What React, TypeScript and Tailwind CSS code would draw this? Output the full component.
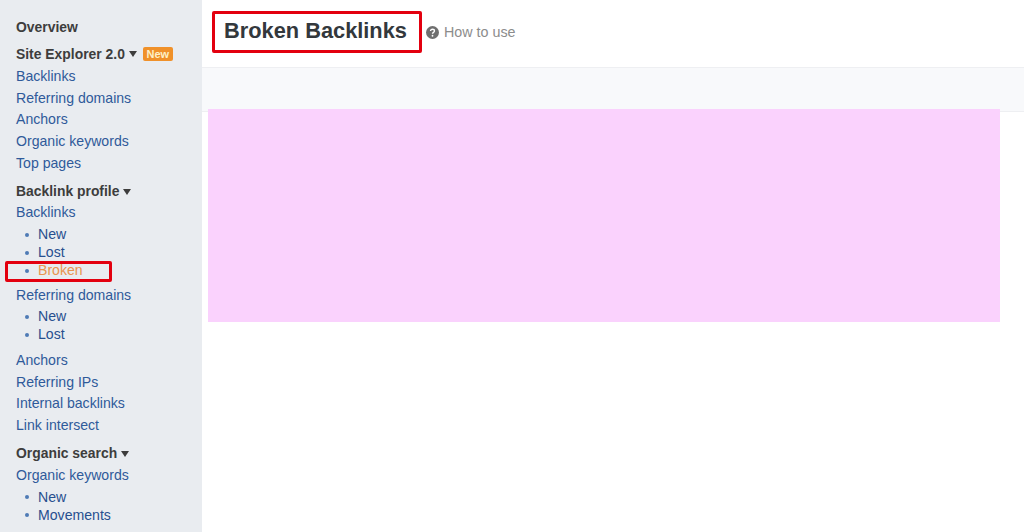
import type { ReactNode } from "react";

const Heading = ({ children, className = "" }: { children: ReactNode; className?: string }) => (
  <div className={`flex h-[22px] items-center text-[13.9px] font-bold text-[#3d3d3d] ${className}`}>{children}</div>
);

const Caret = () => <span className="ml-[4px] h-0 w-0 border-x-[4px] border-t-[6px] border-x-transparent border-t-[#3d3d3d]" />;

const NavLink = ({ label }: { label: string }) => (
  <div className="flex h-[21.75px] items-center text-[14.1px] text-[#2f5a9a]">{label}</div>
);

const SubLink = ({ label, active }: { label: string; active?: boolean }) => (
  <div className={`flex h-[18px] items-center text-[14.1px] ${active ? "text-[#e8954f]" : "text-[#274f8f]"}`}>
    <span className="ml-[9px] mr-[9px] h-[4px] w-[4px] rounded-full bg-[#4f7bb5]" />
    {label}
  </div>
);

const SubList = ({ children, className = "mt-[2px]" }: { children: ReactNode; className?: string }) => (
  <div className={`flex flex-col ${className}`}>{children}</div>
);

export default function App() {
  return (
    <div className="flex h-[532px] w-[1024px] overflow-hidden bg-white font-['Liberation_Sans',Arial,sans-serif]">
      {/* SIDEBAR */}
      <aside className="relative flex w-[202px] shrink-0 flex-col bg-[#e9ecf0] pl-4 pt-4">
        <Heading>Overview</Heading>
        <Heading className="mt-[5px]">
          Site Explorer 2.0
          <Caret />
          <span className="ml-[6px] flex h-[14px] w-[30px] items-center justify-center rounded-[2px] bg-[#f0912a] text-[11px] font-bold text-[#fdf0c8]">New</span>
        </Heading>
        <div className="mt-[0.6px]">
          <NavLink label="Backlinks" />
          <NavLink label="Referring domains" />
          <NavLink label="Anchors" />
          <NavLink label="Organic keywords" />
          <NavLink label="Top pages" />
        </div>

        <Heading className="mt-[6.4px] -mb-[0.8px]">
          Backlink profile
          <Caret />
        </Heading>
        <NavLink label="Backlinks" />
        <SubList>
          <SubLink label="New" />
          <SubLink label="Lost" />
          <SubLink label="Broken" active />
        </SubList>
        <div className="mt-[5.4px]">
          <NavLink label="Referring domains" />
        </div>
        <SubList className="mt-[0.8px]">
          <SubLink label="New" />
          <SubLink label="Lost" />
        </SubList>
        <div className="mt-[6px]">
          <NavLink label="Anchors" />
          <NavLink label="Referring IPs" />
          <NavLink label="Internal backlinks" />
          <NavLink label="Link intersect" />
        </div>

        <Heading className="mt-[6px]">
          Organic search
          <Caret />
        </Heading>
        <NavLink label="Organic keywords" />
        <SubList>
          <SubLink label="New" />
          <SubLink label="Movements" />
        </SubList>

        {/* red highlight over Broken */}
        <div className="absolute left-[5px] top-[261px] h-[21px] w-[107px] rounded-[2px] border-[3px] border-[#e3000f]" />
      </aside>

      {/* MAIN */}
      <main className="flex min-w-0 flex-1 flex-col">
        <div className="flex h-[67px] items-start pl-[10px] pt-[11px]">
          <div className="flex h-[42px] w-[210px] items-center rounded-[2px] border-[3px] border-[#e3000f] pl-[9px]">
            <h1 className="-mt-[2px] text-[21.8px] font-bold leading-none text-[#33383c]">Broken Backlinks</h1>
          </div>
          <div className="ml-[4px] flex h-[43px] items-center text-[14.3px] text-[#8c8c8c]">
            <svg width="13" height="13" viewBox="0 0 16 16" className="mr-[5px] -mt-[1px]">
              <circle cx="8" cy="8" r="8" fill="#6f6f6f" />
              <path d="M5.6 6.2c0-1.4 1.1-2.2 2.4-2.2s2.4.8 2.4 2c0 1.9-2.4 1.8-2.4 3.6" fill="none" stroke="#fff" strokeWidth="1.7" />
              <circle cx="8" cy="12" r="1.1" fill="#fff" />
            </svg>
            How to use
          </div>
        </div>
        <div className="h-[45px] border-y border-[#eeeff2] bg-[#f8f9fb]" />
        <div className="relative z-10 -mt-[3px] ml-[6px] h-[213px] w-[792px] bg-[#fad2fd]" />
      </main>
    </div>
  );
}
